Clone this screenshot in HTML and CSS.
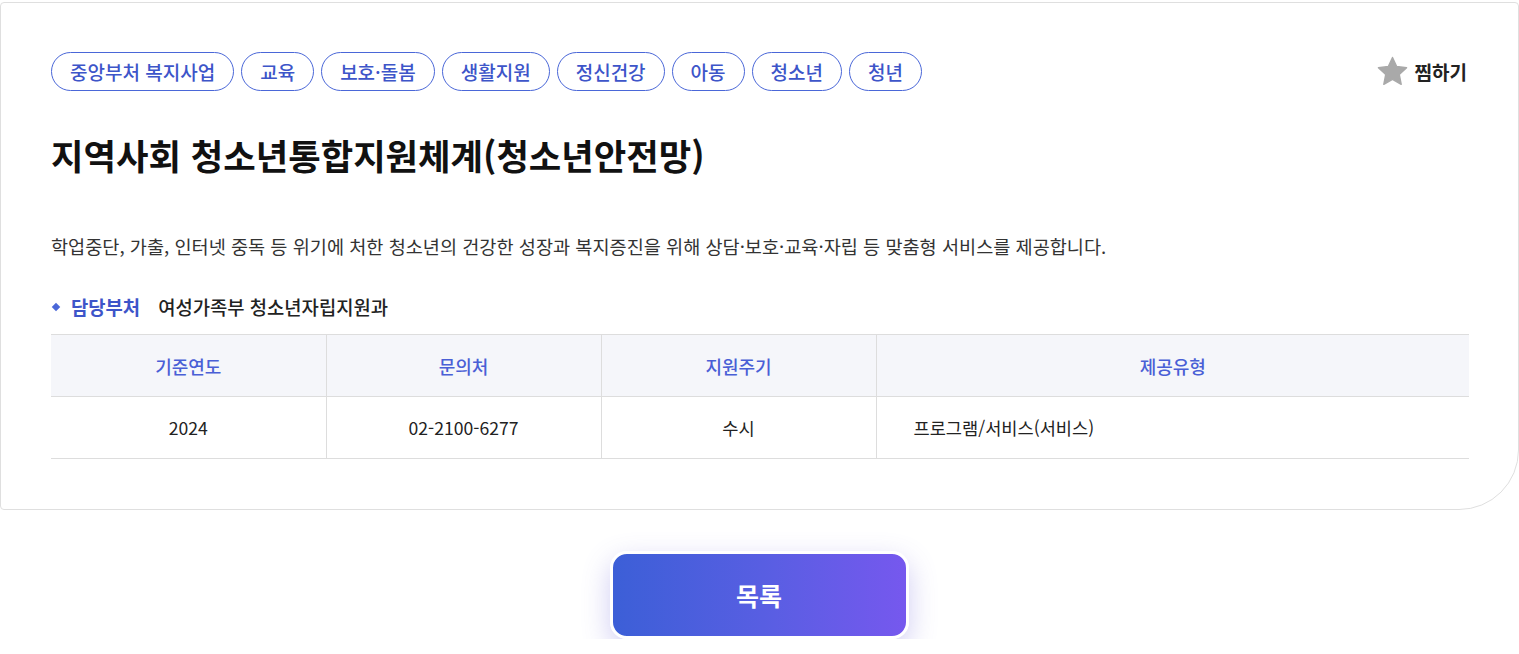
FILE: index.html
```html
<!DOCTYPE html>
<html lang="ko">
<head>
<meta charset="utf-8">
<title>지역사회 청소년통합지원체계</title>
<link rel="stylesheet" href="styles.css">
</head>
<body>
<div class="page">
  <section class="card">
    <div class="top-row">
      <ul class="tags">
        <li class="tag">중앙부처 복지사업</li>
        <li class="tag">교육</li>
        <li class="tag">보호·돌봄</li>
        <li class="tag">생활지원</li>
        <li class="tag">정신건강</li>
        <li class="tag">아동</li>
        <li class="tag">청소년</li>
        <li class="tag">청년</li>
      </ul>
      <button class="fav" type="button">
        <svg class="star" viewBox="0 0 24 24" width="33" height="33" aria-hidden="true">
          <path d="M12 1.8l3.05 6.6 7.2.85-5.33 4.93 1.42 7.12L12 17.7l-6.34 3.6 1.42-7.12L1.75 9.25l7.2-.85z" fill="#a9a9a9" stroke="#a9a9a9" stroke-width="1" stroke-linejoin="round"/>
        </svg>
        <span>찜하기</span>
      </button>
    </div>
    <h1 class="title">지역사회 청소년통합지원체계(청소년안전망)</h1>
    <p class="desc">학업중단, 가출, 인터넷 중독 등 위기에 처한 청소년의 건강한 성장과 복지증진을 위해 상담·보호·교육·자립 등 맞춤형 서비스를 제공합니다.</p>
    <div class="dept">
      <span class="dot"></span>
      <span class="dept-label">담당부처</span>
      <span class="dept-value">여성가족부 청소년자립지원과</span>
    </div>
    <table class="info">
      <thead>
        <tr>
          <th class="c1">기준연도</th>
          <th class="c2">문의처</th>
          <th class="c3">지원주기</th>
          <th class="c4">제공유형</th>
        </tr>
      </thead>
      <tbody>
        <tr>
          <td>2024</td>
          <td>02-2100-6277</td>
          <td>수시</td>
          <td class="left">프로그램/서비스(서비스)</td>
        </tr>
      </tbody>
    </table>
  </section>
  <div class="actions">
    <button class="list-btn" type="button">목록</button>
  </div>
</div>
</body>
</html>
```
FILE: styles.css
```css
* { box-sizing: border-box; }
html, body { margin: 0; padding: 0; background: #fff; }
body {
  font-family: "Noto Sans CJK KR", "Noto Sans", sans-serif;
  color: #222;
}
.page { padding-top: 2px; }
.card {
  width: 1519px;
  border: 1px solid #dfdfdf;
  border-radius: 4px 4px 60px 4px;
  padding: 49px 49px 50px 50px;
  background: #fff;
}
.top-row {
  display: flex;
  align-items: center;
  justify-content: space-between;
  height: 39px;
}
.tags {
  list-style: none;
  margin: 0;
  padding: 0;
  display: flex;
  gap: 7px;
}
.tag {
  height: 39px;
  padding: 0 18px;
  border: 1px solid #4a67d8;
  border-radius: 20px;
  color: #3d55c9;
  font-size: 19px;
  font-weight: 500;
  display: flex;
  align-items: center;
}
.fav {
  display: flex;
  align-items: center;
  gap: 6px;
  background: none;
  border: 0;
  padding: 0;
  margin-right: 2px;
  font-family: inherit;
  font-size: 19px;
  font-weight: 700;
  color: #222;
  cursor: pointer;
}
.star { display: block; }
.title {
  margin: 41px 0 0;
  font-size: 35.3px;
  font-weight: 700;
  color: #111;
  line-height: 46px;
  height: 46px;
}
.desc {
  margin: 54px 0 0;
  font-size: 18.6px;
  line-height: 27px;
  color: #333;
}
.dept {
  margin-top: 34px;
  display: flex;
  align-items: center;
  font-size: 18.8px;
  line-height: 27px;
  height: 27px;
}
.dot {
  width: 6px;
  height: 6px;
  background: #4a67d8;
  transform: rotate(45deg);
  margin: 0 12px 0 2px;
}
.dept-label {
  color: #3d55c9;
  font-weight: 700;
  margin-right: 18px;
}
.dept-value {
  color: #222;
  font-weight: 500;
}
.info {
  margin-top: 14px;
  width: 100%;
  border-collapse: collapse;
}
.info th, .info td {
  border-top: 1px solid #dddddd;
  border-bottom: 1px solid #dddddd;
  border-left: 1px solid #dddddd;
  text-align: center;
  padding: 0;
}
.info th:first-child, .info td:first-child { border-left: 0; }
.info th {
  height: 62px;
  background: #f5f6fa;
  color: #4a5fd6;
  font-size: 18px;
  font-weight: 500;
}
.info td {
  height: 62px;
  color: #222;
  font-size: 17.6px;
  font-weight: 400;
}
.info td.left { text-align: left; padding-left: 37px; }
.c1, .c2, .c3 { width: 275px; }
.actions {
  display: flex;
  justify-content: center;
  padding-top: 41px;
}
.list-btn {
  width: 299px;
  height: 88px;
  margin-right: 1px;
  border: 3px solid #fff;
  border-radius: 17px;
  background: linear-gradient(90deg, #3c5fd7 0%, #5a5ee3 55%, #7658ee 100%);
  color: #fff;
  font-family: inherit;
  font-size: 25px;
  font-weight: 700;
  box-shadow: 0 10px 28px rgba(100, 90, 215, 0.3);
  cursor: pointer;
}
```
